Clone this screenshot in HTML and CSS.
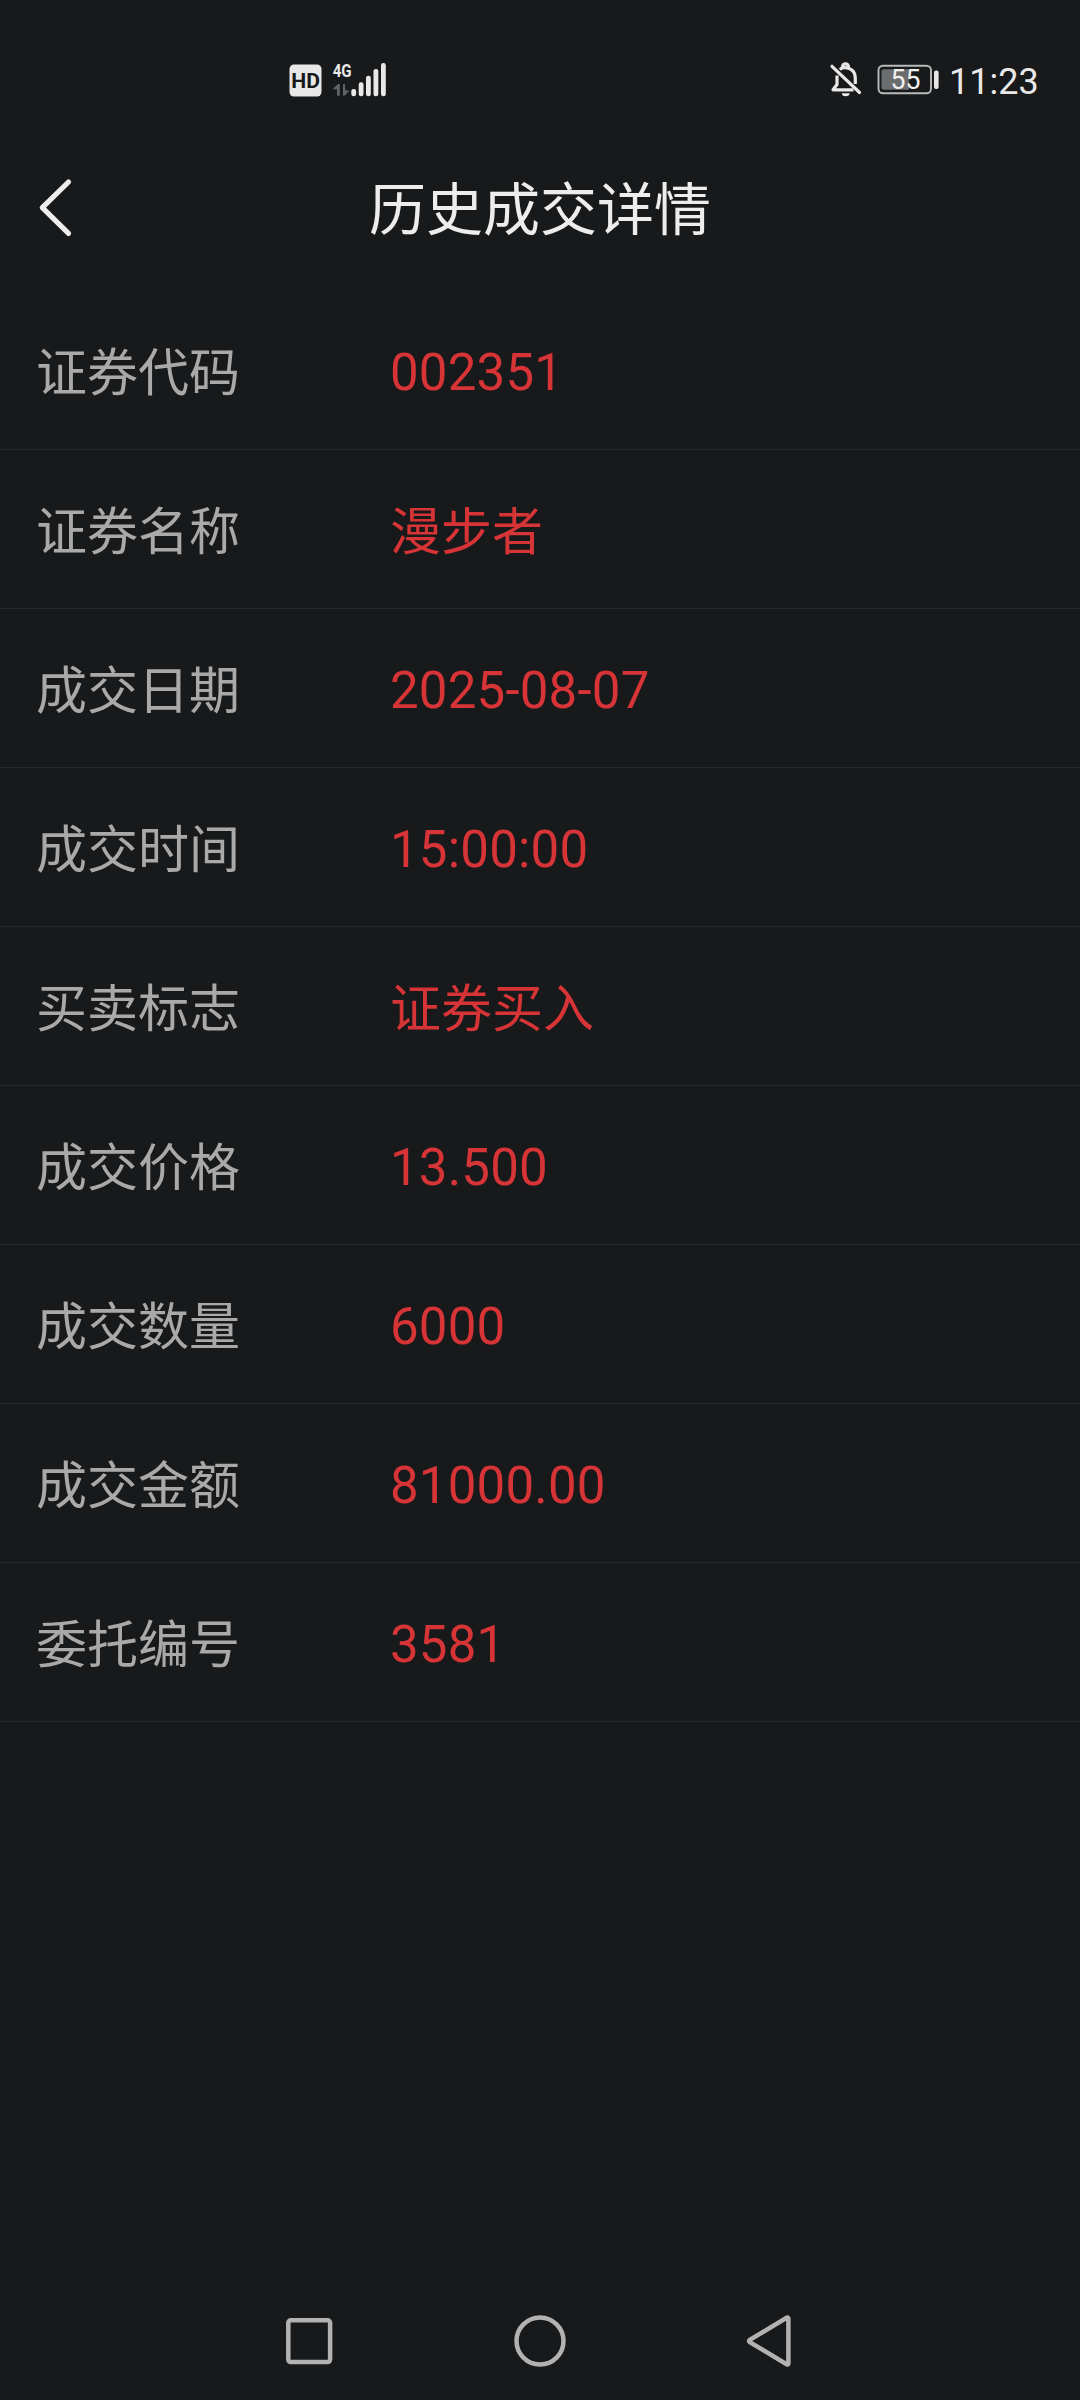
FILE: index.html
```html
<!DOCTYPE html>
<html lang="zh-CN">
<head>
<meta charset="utf-8">
<title>历史成交详情</title>
<link rel="stylesheet" href="styles.css">
</head>
<body>
<div class="status">
  <svg class="signal" width="100" height="40" viewBox="288 60 100 40">
    <rect x="289.500" y="64.500" width="32" height="32" rx="4.500" fill="#e8e8e8"/>
    <text class="hd" x="291.300" y="87.800" textLength="28.700" lengthAdjust="spacingAndGlyphs">HD</text>
    <text class="net" x="332.700" y="77.300" textLength="19" lengthAdjust="spacingAndGlyphs">4G</text>
    <path d="M338 84h1.800v11.700h-2.800v-6.500h-4.500zM343 84h1.800l.6 6.500h4l-5 5.200h-1.400z" fill="#626364"/>
    <g fill="#e8e8e8">
      <rect x="351.300" y="89" width="4.800" height="7.200" rx="2.200"/>
      <rect x="358.700" y="82.300" width="4.800" height="13.900" rx="2.200"/>
      <rect x="366" y="75.700" width="4.800" height="20.500" rx="2.200"/>
      <rect x="373.500" y="69" width="4.800" height="27.200" rx="2.200"/>
      <rect x="381" y="63" width="4.800" height="33.200" rx="2.200"/>
    </g>
  </svg>
  <div class="status-right">
    <svg width="112" height="40" viewBox="828 60 112 40">
      <g fill="none" stroke="#e8e8e8" stroke-width="3.200">
        <path d="M832 66.300 859.500 92.500" stroke-linecap="round"/>
        <path d="M837 75.500v9l-4 5.300h20.500M839.800 69.500C844 66 855.300 67.500 855.300 78v6" stroke-linejoin="round"/>
        <path d="M842.500 68v-1.200a3 3 0 0 1 6 0V68"/>
      </g>
      <path d="M841.800 93.200h7.800a3.900 3 0 0 1-7.800 0z" fill="#e8e8e8"/>
      <rect x="878.500" y="65.700" width="52.500" height="27.600" rx="4.500" fill="none" stroke="#b9babb" stroke-width="1.900"/>
      <path d="M883.500 69.300H909v20.400h-25.500a2 2 0 0 1-2-2V71.300a2 2 0 0 1 2-2z" fill="#6b6c6d"/>
      <rect x="934" y="70.500" width="4.600" height="18.500" rx="2" fill="#e8e8e8"/>
      <text class="level" x="890.500" y="89.200" textLength="30" lengthAdjust="spacingAndGlyphs">55</text>
    </svg>
    <span class="clock">11:23</span>
  </div>
</div>
<header class="header">
  <svg class="back" width="40" height="64" viewBox="36 176 40 64"><path d="M68.500 182 42.300 207.700 68.500 233.400" fill="none" stroke="#ededed" stroke-width="5.200" stroke-linecap="round" stroke-linejoin="round"/></svg>
  <h1 class="title">历史成交详情</h1>
</header>
<main class="list">
  <div class="row"><span class="label">证券代码</span><span class="value">002351</span></div>
  <div class="row"><span class="label">证券名称</span><span class="value han">漫步者</span></div>
  <div class="row"><span class="label">成交日期</span><span class="value">2025-08-07</span></div>
  <div class="row"><span class="label">成交时间</span><span class="value">15:00:00</span></div>
  <div class="row"><span class="label">买卖标志</span><span class="value han">证券买入</span></div>
  <div class="row"><span class="label">成交价格</span><span class="value">13.500</span></div>
  <div class="row"><span class="label">成交数量</span><span class="value">6000</span></div>
  <div class="row"><span class="label">成交金额</span><span class="value">81000.00</span></div>
  <div class="row"><span class="label">委托编号</span><span class="value">3581</span></div>
</main>
<nav class="nav">
  <svg width="56" height="56" viewBox="281 2313 56 56"><rect x="288.300" y="2320.300" width="41.800" height="41.800" rx="2.500"/></svg>
  <svg width="56" height="56" viewBox="511 2313 56 56"><circle cx="540" cy="2341" r="23.500"/></svg>
  <svg width="56" height="56" viewBox="741 2313 56 56"><path d="M787 2317.600Q788.400 2317 788.400 2318.800V2363.200Q788.400 2365 787 2364.400L749.800 2342.200Q748.200 2341 749.800 2339.800Z"/></svg>
</nav>
</body>
</html>
```

FILE: styles.css
```css
* { box-sizing: border-box; }

body {
  margin: 0;
  width: 1080px;
  height: 2400px;
  display: flex;
  flex-direction: column;
  overflow: hidden;
  background: #17191a;
  font-family: Roboto, "Noto Sans CJK SC", sans-serif;
}

svg { display: block; flex: none; }

.status {
  height: 125px;
  padding: 60px 42px 0 288px;
  display: flex;
  justify-content: space-between;
  align-items: flex-start;
}

.hd { font: 700 20.5px Roboto, sans-serif; fill: #17191a; }
.net { font: 700 19px Roboto, sans-serif; fill: #e8e8e8; }
.level { font: 400 27.5px Roboto, sans-serif; fill: #f0f0f0; }

.status-right { display: flex; width: 210px; }

.clock {
  margin-left: 9px;
  padding-top: 1px;
  font-size: 36px;
  line-height: 42px;
  color: #e8e8e8;
  white-space: nowrap;
}

.header {
  height: 166px;
  padding: 0 36px;
  display: grid;
  grid-template-columns: 40px 1fr 40px;
  align-items: center;
}

.title {
  margin: 0;
  padding-top: 6px;
  text-align: center;
  font-size: 57px;
  line-height: 84px;
  font-weight: 400;
  color: #ededed;
}

.list { flex: 1; }

.row {
  height: 159px;
  padding: 6px 0 0 36px;
  display: flex;
  align-items: center;
  border-bottom: 1px solid #26282a;
  font-size: 51px;
  line-height: 76px;
}

.label { width: 354px; padding-top: 2px; color: #a9a9a9; }
.value { color: #d63437; letter-spacing: 0.2px; }
.han { padding-top: 2px; letter-spacing: 0; }

.nav {
  height: 87px;
  padding: 0 283px 0 281px;
  display: flex;
  justify-content: space-between;
}

.nav svg { fill: none; stroke: #b2b2b2; stroke-width: 4.500px; }
```
